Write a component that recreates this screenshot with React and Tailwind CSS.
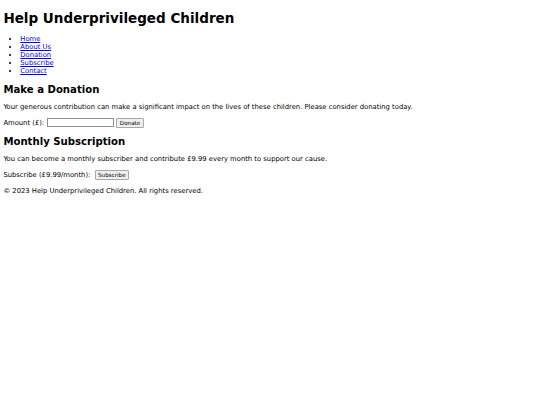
import React from "react";

const links = ["Home", "About Us", "Donation", "Subscribe", "Contact"];

const Button = ({ children }) => (
  <button className="ml-[2px] px-[2.5px] py-px text-[5.63px] leading-[normal] bg-[#efefef] border border-[#a8a8a8] rounded-[1px] text-black align-middle">
    {children}
  </button>
);

export default function App() {
  return (
    <div
      className="bg-white text-black min-h-screen px-[3.38px] py-px text-[6.8px] leading-[normal]"
      style={{ fontFamily: '"DejaVu Sans", sans-serif' }}
    >
      <h1 className="text-[13.52px] font-bold my-[9.06px] leading-[normal]">
        Help Underprivileged Children
      </h1>
      <ul className="list-disc pl-[16.9px] mt-[7.5px] mb-[6.76px] marker:text-[6px]">
        {links.map((l) => (
          <li key={l}>
            <a href="#" className="text-[#0000ee] underline">
              {l}
            </a>
          </li>
        ))}
      </ul>

      <h2 className="text-[10.14px] font-bold my-[8.42px] leading-[normal]">
        Make a Donation
      </h2>
      <p className="my-[6.76px]">
        Your generous contribution can make a significant impact on the lives of these children. Please consider donating today.
      </p>
      <form className="my-[6.76px]">
        <label>Amount (£): </label>
        <input
          type="number"
          className="ml-px w-[67px] h-[8.5px] border border-[#909090] bg-white align-middle"
        />
        <Button>Donate</Button>
      </form>

      <h2 className="text-[10.14px] font-bold my-[8.42px] leading-[normal]">
        Monthly Subscription
      </h2>
      <p className="my-[6.76px]">
        You can become a monthly subscriber and contribute £9.99 every month to support our cause.
      </p>
      <form className="my-[6.76px]">
        <label>Subscribe (£9.99/month): </label>
        <Button>Subscribe</Button>
      </form>

      <footer>
        <p className="my-[6.76px]">© 2023 Help Underprivileged Children. All rights reserved.</p>
      </footer>
    </div>
  );
}
